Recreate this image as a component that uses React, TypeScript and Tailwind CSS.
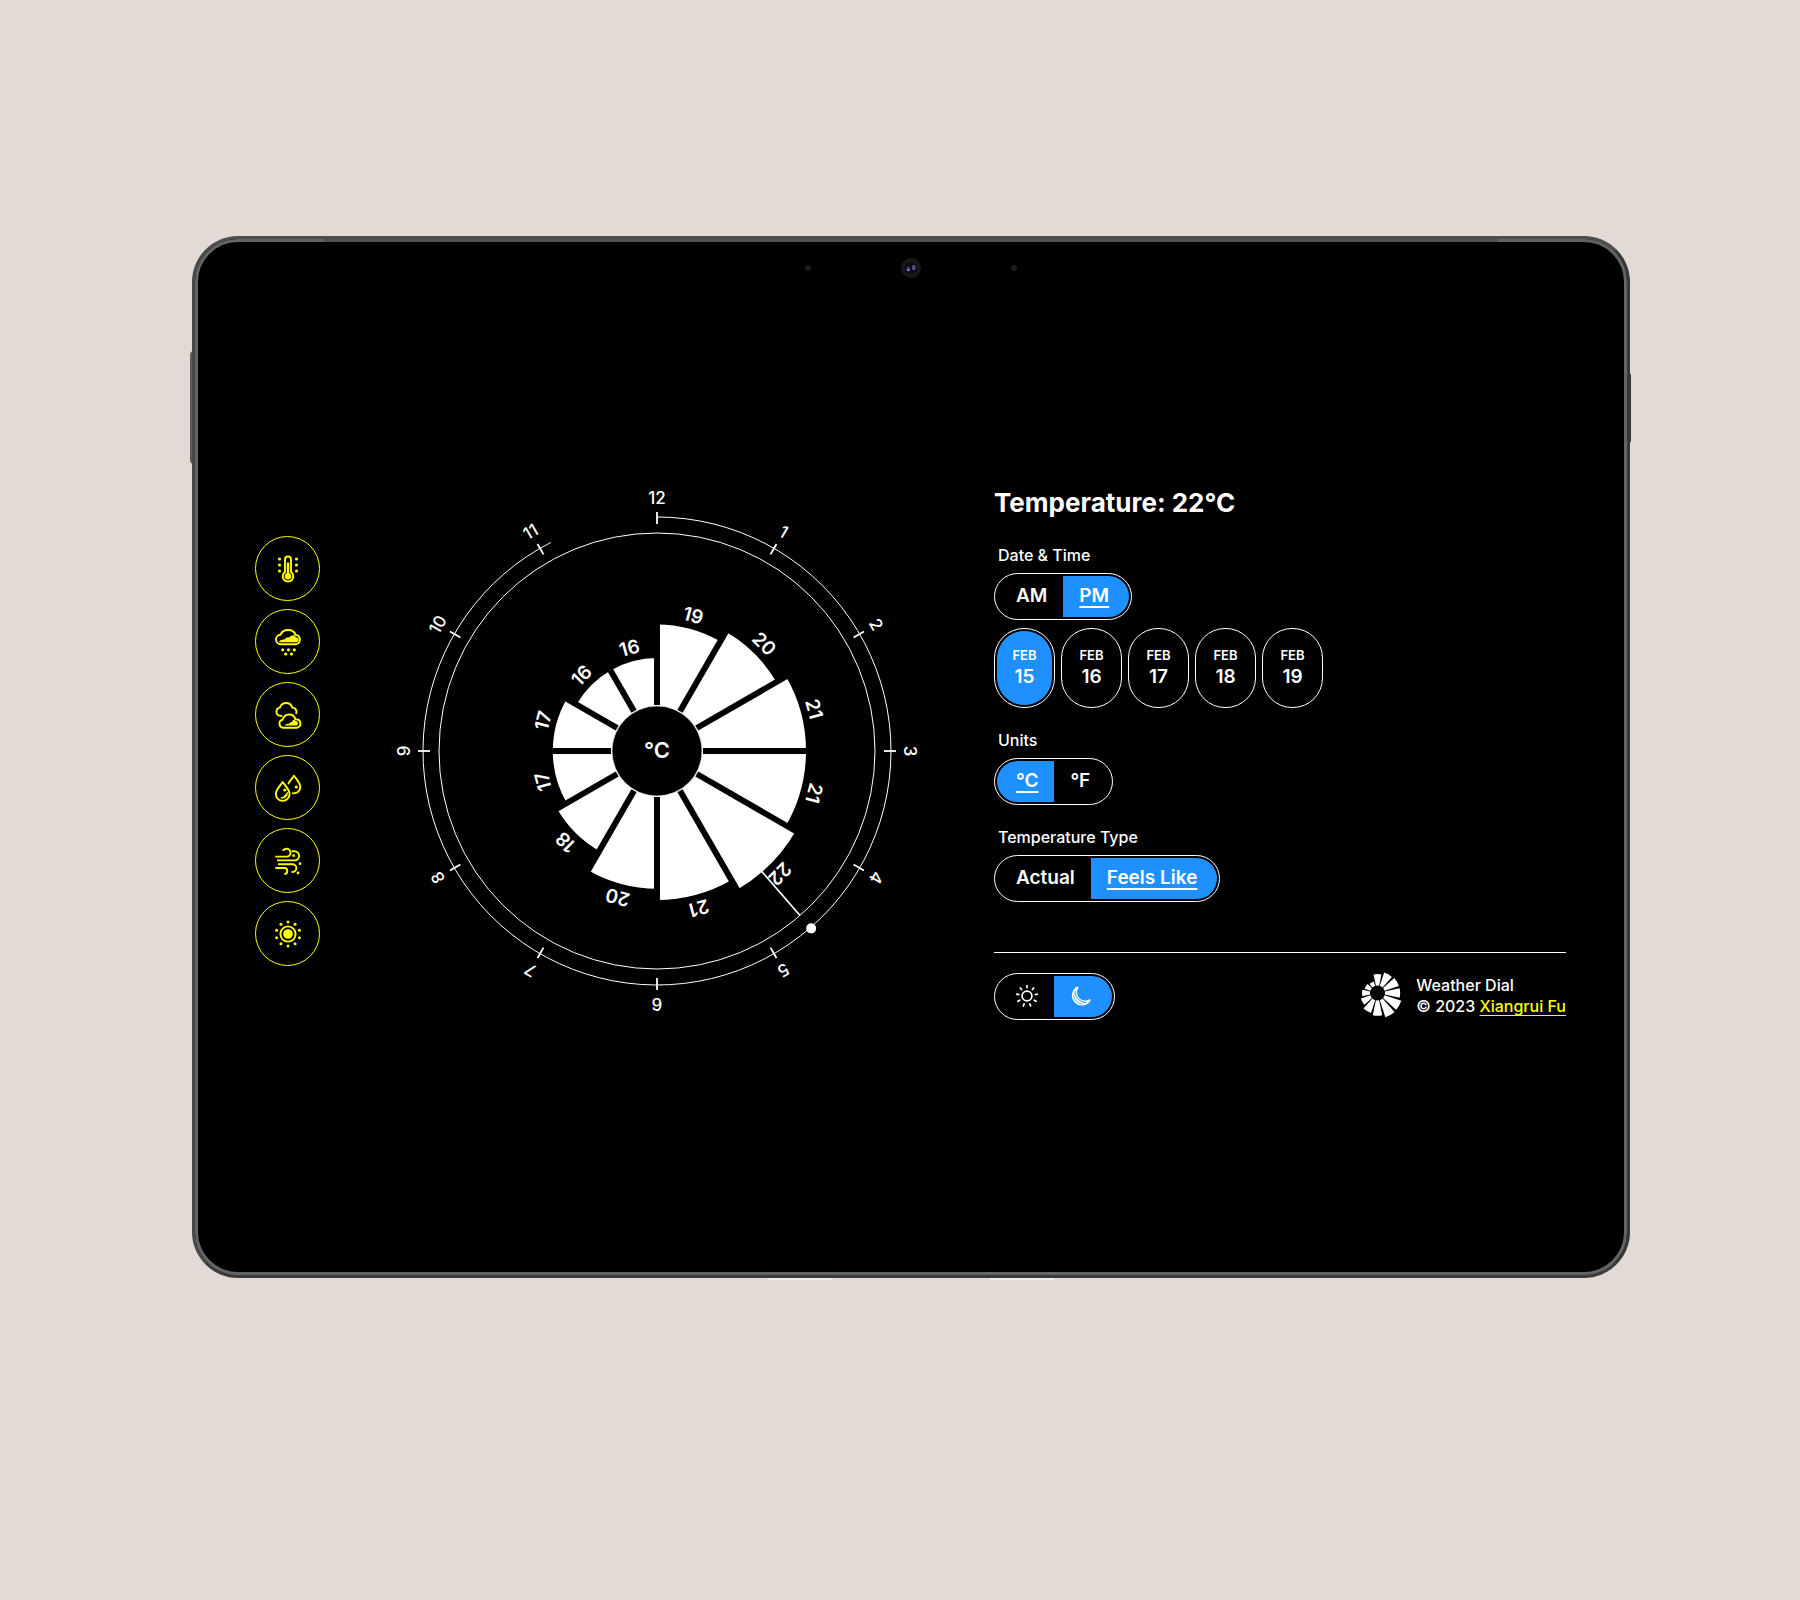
import { useState } from "react";
import type { ReactNode } from "react";

const CENTER = 270;

const hours = [
  { label: "12", temp: 19 },
  { label: "1", temp: 20 },
  { label: "2", temp: 21 },
  { label: "3", temp: 21 },
  { label: "4", temp: 22 },
  { label: "5", temp: 21 },
  { label: "6", temp: 20 },
  { label: "7", temp: 18 },
  { label: "8", temp: 17 },
  { label: "9", temp: 17 },
  { label: "10", temp: 16 },
  { label: "11", temp: 16 },
];

const radiusFor = (temp: number) => 93 + (temp - 16) * 11.2;

function point(cx: number, cy: number, r: number, deg: number) {
  const a = (deg * Math.PI) / 180;
  return `${(cx + r * Math.sin(a)).toFixed(2)} ${(cy - r * Math.cos(a)).toFixed(2)}`;
}

function wedge(cx: number, cy: number, inner: number, outer: number, from: number, to: number) {
  return [
    `M${point(cx, cy, inner, from)}`,
    `L${point(cx, cy, outer, from)}`,
    `A${outer} ${outer} 0 0 1 ${point(cx, cy, outer, to)}`,
    `L${point(cx, cy, inner, to)}`,
    `A${inner} ${inner} 0 0 0 ${point(cx, cy, inner, from)}Z`,
  ].join("");
}

function Dial() {
  const selected = 139;
  return (
    <svg viewBox="0 0 540 540" className="w-full max-w-[540px]" role="img" aria-label="Hourly temperature dial">
      {hours.map((h, i) => (
        <path key={h.label} d={wedge(CENTER, CENTER, 44, radiusFor(h.temp), i * 30, i * 30 + 30)} fill="white" />
      ))}
      {hours.map((h, i) => (
        <line
          key={h.label}
          x1={CENTER}
          x2={CENTER}
          y1={CENTER - 46}
          y2={CENTER - 170}
          stroke="black"
          strokeWidth="6"
          transform={`rotate(${i * 30} ${CENTER} ${CENTER})`}
        />
      ))}
      <circle cx={CENTER} cy={CENTER} r="45" fill="black" stroke="white" strokeWidth="0.6" />
      <circle cx={CENTER} cy={CENTER} r="218" fill="none" stroke="white" />
      <path
        d={`M${point(CENTER, CENTER, 234, 0)}A234 234 0 1 1 ${point(CENTER, CENTER, 234, 333)}`}
        fill="none"
        stroke="white"
      />
      {hours.map((h, i) => (
        <g key={h.label} transform={`rotate(${i * 30} ${CENTER} ${CENTER})`}>
          <line x1={CENTER} x2={CENTER} y1={CENTER - 239} y2={CENTER - 227} stroke="white" strokeWidth="1.8" />
          <text x={CENTER} y={CENTER - 247} textAnchor="middle" fill="white" fontSize="17" fontWeight="500">
            {h.label}
          </text>
        </g>
      ))}
      {hours.map((h, i) => (
        <text
          key={h.label}
          x={CENTER}
          y={CENTER - radiusFor(h.temp) - 7}
          textAnchor="middle"
          fill="white"
          fontSize="19"
          fontWeight="600"
          transform={`rotate(${i * 30 + 15} ${CENTER} ${CENTER})`}
        >
          {h.temp}
        </text>
      ))}
      <g transform={`rotate(${selected} ${CENTER} ${CENTER})`}>
        <line x1={CENTER} x2={CENTER} y1={CENTER - 159} y2={CENTER - 218} stroke="white" strokeWidth="1.7" />
        <circle cx={CENTER} cy={CENTER - 235} r="5" fill="white" />
      </g>
      <text x={CENTER} y={CENTER + 7} textAnchor="middle" fill="white" fontSize="22" fontWeight="600">
        °C
      </text>
    </svg>
  );
}

function Dots({ points, r = 1.4 }: { points: [number, number][]; r?: number }) {
  return (
    <>
      {points.map(([x, y]) => (
        <circle key={`${x}-${y}`} cx={x} cy={y} r={r} fill="currentColor" stroke="none" />
      ))}
    </>
  );
}

const sunDots = Array.from({ length: 10 }, (_, i): [number, number] => {
  const a = (i * 36 * Math.PI) / 180;
  return [14 + 12 * Math.sin(a), 14 - 12 * Math.cos(a)];
});

const weatherViews: { name: string; icon: ReactNode }[] = [
  {
    name: "Temperature",
    icon: (
      <>
        <path d="M11 4.5a3 3 0 0 1 6 0v12.400a5.300 5.300 0 1 1-6 0z" />
        <path d="M14 7.500v12" strokeWidth="2.400" strokeLinecap="butt" />
        <circle cx="14" cy="21.200" r="3.300" fill="currentColor" stroke="none" />
        <Dots points={[[5.5, 4], [5.5, 10], [5.5, 16], [22.5, 4], [22.5, 10], [22.5, 16]]} r={1.6} />
      </>
    ),
  },
  {
    name: "Precipitation",
    icon: (
      <>
        <path d="M7 16.200A4.700 4.700 0 0 1 6.400 6.800C7.800 3.600 10.800 2 14 2c3.800 0 6.600 1.900 7.600 4.900A4.700 4.700 0 0 1 22 16.200z" />
        <path
          d="M4.800 14.200c.8-2 3.400-3 5.600-2.600 1.200-1.800 3.400-2.600 5-2.200 1.200-1.800 3.800-2.600 5.400-1.800.2 1 .8 1.600 1.800 1.600 3 .8 2.600 5-.4 5z"
          fill="currentColor"
          stroke="none"
        />
        <Dots points={[[8.7, 21.800], [14.5, 21.800], [20.3, 21.800], [11.7, 26], [17.5, 26]]} r={1.6} />
      </>
    ),
  },
  {
    name: "Cloud cover",
    icon: (
      <>
        <path d="M7.600 14.900H6.400a4.200 4.200 0 0 1-.6-8.300C7 3.600 9.600 2 12.200 2c3 0 5.200 1.800 6 4.600a4.200 4.200 0 0 1 4.100 5.600" />
        <path d="M9.200 26.700a4 4 0 0 1-.6-7.900c.9-3.300 3.500-5.300 6.600-5.300 3 0 5.300 1.800 6.200 4.700 6.600 0 6.600 8.500.8 8.500z" />
        <path
          d="M10.500 24.500c1-1.400 2.800-1.800 4.400-1.700.8-1.500 2-1.900 3.200-1.900.2-1.600 1.200-2.400 2.600-2.200.2 1 .8 1.400 1.700 1.500 2.400.6 2 4.300-.4 4.300z"
          fill="currentColor"
          stroke="none"
        />
      </>
    ),
  },
  {
    name: "Humidity",
    icon: (
      <>
        <path d="M8.700 8c-2 3-6.900 7.600-6.900 12a6.900 6.900 0 0 0 13.800 0c0-4.400-4.900-9-6.900-12z" />
        <path d="M14.500 9.400C16 6.400 18.600 4 20 1.700c2 3 6.300 7 6.300 11.300 0 4-3.200 6.600-7.400 6.300" />
        <path d="M13.300 18.500c.8 4.500-3.600 6.700-6.500 5.300 3.500-.3 4.700-3.300 6.500-5.300z" fill="currentColor" strokeWidth="0.8" />
        <Dots points={[[10.8, 16], [22.3, 13]]} r={1.6} />
      </>
    ),
  },
  {
    name: "Wind",
    icon: (
      <>
        <path strokeLinecap="butt" d="M1.300 9.600h11.300a3.900 3.900 0 0 0 0-7.800c-2 0-3.200.7-3.900 2" />
        <path strokeLinecap="butt" d="M3 13.400h17.500a4.600 4.600 0 0 0 0-9.200h-2.700" />
        <path strokeLinecap="butt" d="M4 17.200h14.500a3.900 3.900 0 0 1 0 7.800h-1" />
        <path strokeLinecap="butt" d="M1.300 21h9a3 3 0 0 1 0 6" />
        <Dots points={[[19.6, 8.7], [26, 16.7], [24, 26]]} />
      </>
    ),
  },
  {
    name: "UV index",
    icon: (
      <>
        <circle cx="14" cy="14" r="7.600" />
        <circle cx="14" cy="14" r="4.800" fill="currentColor" stroke="none" />
        <Dots points={sunDots} r={1.5} />
      </>
    ),
  },
];

function SunIcon() {
  return (
    <svg
      viewBox="1 1 22 22"
      className="size-[22px] overflow-visible"
      fill="none"
      stroke="currentColor"
      strokeWidth="1.7"
      strokeLinecap="round"
      aria-hidden="true"
    >
      <circle cx="12" cy="12" r="4.9" />
      {Array.from({ length: 9 }, (_, i) => (
        <path key={i} d="M12 3.600V1.500" transform={`rotate(${i * 40} 12 12)`} />
      ))}
    </svg>
  );
}

function MoonIcon() {
  return (
    <svg
      viewBox="1 1 22 22"
      className="size-[22px] overflow-visible"
      fill="none"
      strokeLinejoin="round"
      strokeLinecap="round"
      aria-hidden="true"
    >
      <path
        d="M8.700 3.300A9.200 9.200 0 1 0 20.900 16 9 9 0 0 1 8.700 3.300z"
        fill="currentColor"
        stroke="currentColor"
        strokeWidth="1.7"
      />
      <path d="M6.200 7.200c-.6 5.400 3.600 10.600 10.800 11.600" stroke="#1e90ff" strokeWidth="0.9" />
      <path d="M4.700 11.500c.4 4.400 3.500 7.700 8.300 8.500" stroke="#1e90ff" strokeWidth="0.7" />
    </svg>
  );
}

const logoRadii = [19, 21.5, 22.5, 22.7, 25, 25.5, 22.7, 21, 17.5, 15.5, 13.5, 12];

function Logo() {
  return (
    <svg viewBox="0 0 40 44" className="h-11 w-10 shrink-0 overflow-visible" aria-hidden="true">
      {logoRadii.map((r, i) => (
        <path key={i} d={wedge(16.5, 19, 7.5, r, i * 30 - 15 + 3, i * 30 + 15 - 3)} fill="white" />
      ))}
    </svg>
  );
}

type Option = { value: string; content: ReactNode; label?: string };

function Segmented({ name, options, initial }: { name: string; options: Option[]; initial: string }) {
  const [value, setValue] = useState(initial);
  return (
    <div className="flex w-fit rounded-full border border-white p-0.5">
      {options.map((o) => (
        <label
          key={o.value}
          className={`flex h-[41px] cursor-pointer items-center rounded-[3px] px-4 text-[19px] font-semibold decoration-2 underline-offset-4 first:rounded-l-full first:pl-[19px] last:rounded-r-full last:pr-5 ${
            value === o.value ? "bg-[#1e90ff] underline" : ""
          }`}
        >
          <input
            type="radio"
            name={name}
            value={o.value}
            checked={value === o.value}
            onChange={() => setValue(o.value)}
            aria-label={o.label}
            className="sr-only"
          />
          {o.content}
        </label>
      ))}
    </div>
  );
}

function Days() {
  const [day, setDay] = useState(15);
  return (
    <div className="mt-2 flex gap-1.5">
      {[15, 16, 17, 18, 19].map((d) => (
        <label key={d} className="h-20 w-[61px] cursor-pointer rounded-[30px] border border-white p-0.5">
          <input type="radio" name="day" checked={day === d} onChange={() => setDay(d)} className="sr-only" />
          <span
            className={`flex h-full flex-col items-center justify-center rounded-[28px] font-semibold ${
              day === d ? "bg-[#1e90ff]" : ""
            }`}
          >
            <span className="text-[13px] leading-[18px]">FEB</span>
            <span className="text-[19px] leading-[26px]">{d}</span>
          </span>
        </label>
      ))}
    </div>
  );
}

const legend = "mb-2 ml-1 text-base leading-5 font-medium";

function Controls() {
  return (
    <div>
      <h1 className="mb-[22px] text-[26px] leading-10 font-bold">Temperature: 22°C</h1>
      <form className="space-y-[22px]">
        <fieldset>
          <legend className={legend}>Date &amp; Time</legend>
          <Segmented
            name="period"
            initial="pm"
            options={[
              { value: "am", content: "AM" },
              { value: "pm", content: "PM" },
            ]}
          />
          <Days />
        </fieldset>
        <fieldset>
          <legend className={legend}>Units</legend>
          <Segmented
            name="units"
            initial="c"
            options={[
              { value: "c", content: "°C" },
              { value: "f", content: "°F" },
            ]}
          />
        </fieldset>
        <fieldset>
          <legend className={legend}>Temperature Type</legend>
          <Segmented
            name="type"
            initial="feels"
            options={[
              { value: "actual", content: "Actual" },
              { value: "feels", content: "Feels Like" },
            ]}
          />
        </fieldset>
      </form>
      <footer className="mt-[50px] flex items-center justify-between border-t border-white pt-5">
        <Segmented
          name="theme"
          initial="dark"
          options={[
            { value: "light", content: <SunIcon />, label: "Light theme" },
            { value: "dark", content: <MoonIcon />, label: "Dark theme" },
          ]}
        />
        <div className="flex items-center gap-[15px]">
          <Logo />
          <p className="text-base leading-[21px] font-medium">
            Weather Dial
            <br />© 2023{" "}
            <a href="#author" className="text-[#ffff00] underline underline-offset-3">
              Xiangrui Fu
            </a>
          </p>
        </div>
      </footer>
    </div>
  );
}

function Camera() {
  return (
    <div className="absolute inset-x-0 top-4 flex items-center justify-center" aria-hidden="true">
      <span className="size-1.5 rounded-full bg-[#1d1d1d]" />
      <svg viewBox="0 0 20 20" className="mx-[90px] size-5">
        <circle cx="10" cy="10" r="10" fill="#18181a" />
        <circle cx="10" cy="10" r="6" fill="#0d0b12" />
        <ellipse cx="7.2" cy="11" rx="1.8" ry="2.6" fill="#4c3f80" />
        <ellipse cx="12.8" cy="9.5" rx="1.8" ry="2.8" fill="#5d4c91" />
        <circle cx="7.5" cy="12" r="0.9" fill="#a79be0" />
      </svg>
      <span className="size-1.5 rounded-full bg-[#1d1d1d]" />
    </div>
  );
}

export default function App() {
  return (
    <div className="min-h-screen bg-[#e3dad5] pt-[236px] pr-[170px] pb-[322px] pl-[192px] font-['Inter',sans-serif] text-white">
      <div className="relative">
        <span className="absolute top-[115px] -left-0.5 h-[113px] w-1 rounded-l-sm bg-[#5a5c5c]" />
        <span className="absolute top-[136px] -right-px h-[72px] w-1 rounded-r-sm bg-[#343838]" />
        <div className="relative flex aspect-[1438/1042] flex-col rounded-[46px] border-[3px] border-t-[#4c4e4e] border-r-[#363838] border-b-[#3a3c3c] border-l-[#474a4a] bg-black">
          <div className="relative grid grow grid-cols-[65px_674fr_572fr] items-center rounded-[43px] border-[3px] border-[#646464] pr-[58px] pb-3 pl-[57px]">
            <span className="absolute inset-x-[126px] -top-[3px] h-[3px] bg-[#505050]" />
            <Camera />
            <nav className="flex flex-col gap-2" aria-label="Weather data">
              {weatherViews.map((v) => (
                <button
                  key={v.name}
                  type="button"
                  aria-label={v.name}
                  className="flex size-[65px] cursor-pointer items-center justify-center rounded-full border border-[#ffff00] text-[#ffff00]"
                >
                  <svg
                    viewBox="0 0 28 28"
                    className="size-7 overflow-visible"
                    fill="none"
                    stroke="currentColor"
                    strokeWidth="1.9"
                    strokeLinecap="round"
                    strokeLinejoin="round"
                    aria-hidden="true"
                  >
                    {v.icon}
                  </svg>
                </button>
              ))}
            </nav>
            <div className="flex justify-center">
              <Dial />
            </div>
            <Controls />
          </div>
          <span className="absolute -bottom-[5px] left-[40%] h-0.5 w-16 rounded-full bg-[#f3eeeb]" />
          <span className="absolute right-[40%] -bottom-[5px] h-0.5 w-16 rounded-full bg-[#f3eeeb]" />
        </div>
      </div>
    </div>
  );
}
